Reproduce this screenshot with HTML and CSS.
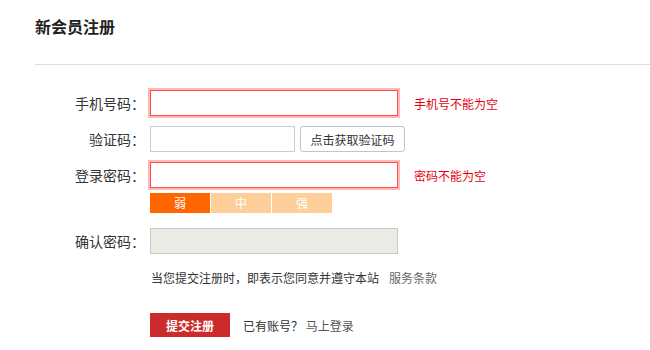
FILE: index.html
```html
<!DOCTYPE html>
<html lang="zh-CN">
<head>
    <meta charset="UTF-8">
    <meta name="viewport" content="width=device-width, initial-scale=1.0">
    <title>新会员注册</title>
    <link rel="stylesheet" href="styles.css">
</head>
<body>
    <div class="header">
        <h2 class="title">新会员注册</h2>
    </div>

    <form class="reg-form">
        <div class="row">
            <label class="label">手机号码：</label>
            <input type="text" class="field field-error">
            <span class="tip">手机号不能为空</span>
        </div>
        <div class="row">
            <label class="label">验证码：</label>
            <input type="text" class="field field-code">
            <button type="button" class="btn-code">点击获取验证码</button>
        </div>
        <div class="row row-tight">
            <label class="label">登录密码：</label>
            <input type="password" class="field field-error">
            <span class="tip">密码不能为空</span>
        </div>
        <div class="strength">
            <span class="level level-on">弱</span>
            <span class="level">中</span>
            <span class="level">强</span>
        </div>
        <div class="row">
            <label class="label">确认密码：</label>
            <input type="password" class="field field-disabled" disabled>
        </div>
        <p class="agree">当您提交注册时，即表示您同意并遵守本站<a href="#" class="link">服务条款</a></p>
        <div class="actions">
            <button type="submit" class="btn-submit">提交注册</button>
            <span class="login">已有账号？ <a href="#" class="link">马上登录</a></span>
        </div>
    </form>
</body>
</html>
```

FILE: styles.css
```css
body {
    margin: 0;
    font-family: "Noto Sans CJK SC", "Noto Sans", sans-serif;
    color: #333;
    background: #fff;
}

.header {
    margin-left: 35px;
    height: 64px;
    border-bottom: 1px solid #ddd;
}

.title {
    margin: 0;
    padding-top: 14px;
    font-size: 16px;
    line-height: 24px;
    font-weight: bold;
    color: #222;
}

.reg-form {
    padding-top: 25px;
}

.row {
    display: flex;
    align-items: center;
    height: 26px;
    margin-bottom: 10px;
}

.row-tight {
    margin-bottom: 0;
}

.label {
    width: 145px;
    text-align: right;
    font-size: 14px;
    line-height: 20px;
    color: #333;
}

.field {
    box-sizing: border-box;
    width: 248px;
    height: 26px;
    margin: 0 0 0 5px;
    padding: 0 6px;
    border: 1px solid #ccc;
    outline: none;
    font-size: 13px;
}

.field-error {
    border-color: #ff4d4d;
    box-shadow: 0 0 0 2px #ffb9b9;
}

.field-code {
    width: 145px;
}

.field-disabled {
    background: #ebeae4;
    border-color: #c8c8c8;
}

.btn-code {
    box-sizing: border-box;
    height: 26px;
    width: 105px;
    margin-left: 5px;
    padding: 0;
    background: #fff;
    border: 1px solid #c4c4c4;
    border-radius: 3px;
    font-family: inherit;
    font-size: 12px;
    color: #333;
}

.tip {
    margin-left: 16px;
    font-size: 12px;
    color: #e60012;
}

.strength {
    display: flex;
    gap: 1px;
    margin: 5px 0 15px 150px;
}

.level {
    width: 60px;
    height: 20px;
    line-height: 20px;
    text-align: center;
    font-size: 12px;
    color: #fff;
    background: #ffcf9a;
}

.level-on {
    background: #ff6600;
}

.agree {
    margin: 16px 0 0 151px;
    font-size: 12px;
    line-height: 16px;
    color: #333;
}

.link {
    color: #666;
    text-decoration: none;
    margin-left: 10px;
}

.actions {
    display: flex;
    align-items: center;
    margin: 27px 0 0 150px;
}

.btn-submit {
    width: 80px;
    height: 24px;
    padding: 0;
    border: none;
    background: #cc2b2b;
    color: #fff;
    font-family: inherit;
    font-size: 12px;
    font-weight: bold;
}

.login {
    margin-left: 13px;
    font-size: 12px;
    color: #333;
}

.login .link {
    margin-left: 0;
    color: #555;
}
```
